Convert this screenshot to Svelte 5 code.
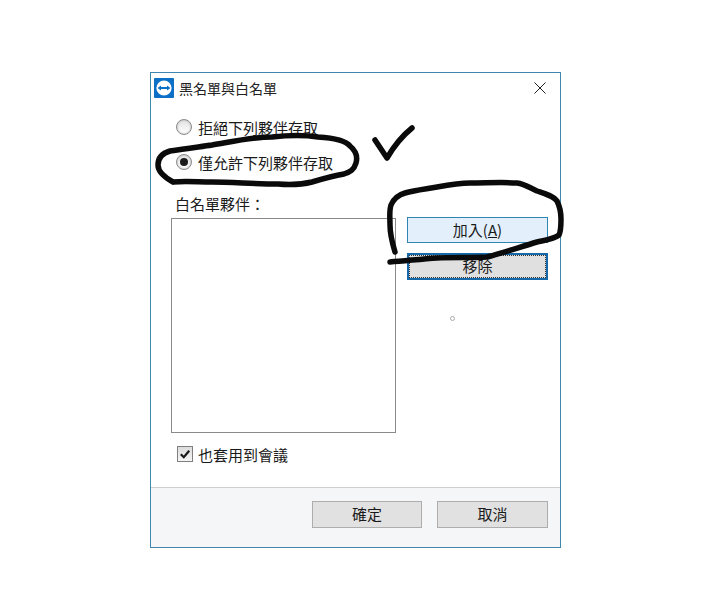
<script lang="ts">
  let mode = $state('allow');
  let alsoMeetings = $state(true);
  const partners: string[] = [];
</script>

<div class="page">
  <div class="dialog">
    <header class="titlebar">
      <svg class="app-icon" viewBox="0 0 20 20" width="20" height="20" aria-hidden="true">
        <rect width="20" height="20" rx="1" fill="#0e6fc6" />
        <circle cx="10" cy="10" r="7.6" fill="#fff" />
        <path d="M3.6 10 L7 7.6 V9 H13 V7.6 L16.4 10 L13 12.4 V11 H7 V12.4 Z" fill="#0e6fc6" />
      </svg>
      <span class="title">黑名單與白名單</span>
      <svg class="close" viewBox="0 0 12 12" width="12" height="12" aria-hidden="true">
        <path d="M0.5 0.5 L11.5 11.5 M11.5 0.5 L0.5 11.5" stroke="#222" stroke-width="1" fill="none" />
      </svg>
    </header>

    <div class="body">
      <label class="option">
        <input type="radio" bind:group={mode} value="deny" />
        <span class="radio"></span>
        拒絕下列夥伴存取
      </label>
      <label class="option">
        <input type="radio" bind:group={mode} value="allow" />
        <span class="radio"></span>
        僅允許下列夥伴存取
      </label>

      <div class="list-label">白名單夥伴：</div>
      <div class="list-row">
        <div class="listbox">
          {#each partners as p}
            <div>{p}</div>
          {/each}
        </div>
        <div class="side">
          <button class="btn add">加入(<u>A</u>)</button>
          <button class="btn remove"><span>移除</span></button>
          <span class="cursor"></span>
        </div>
      </div>

      <label class="check">
        <input type="checkbox" bind:checked={alsoMeetings} />
        <span class="box">
          {#if alsoMeetings}
            <svg viewBox="0 0 14 14" width="14" height="14" aria-hidden="true">
              <path d="M2.8 7.2 L5.8 10.2 L11.2 3.8" stroke="#1a1a1a" stroke-width="2.2" fill="none" />
            </svg>
          {/if}
        </span>
        也套用到會議
      </label>
    </div>

    <footer class="footer">
      <button class="btn plain">確定</button>
      <button class="btn plain">取消</button>
    </footer>
  </div>

  <!-- marker scribbles drawn on top of the screenshot -->
  <svg class="ink" viewBox="0 0 710 599" width="710" height="599" aria-hidden="true">
    <path d="M173 182 C164 177 158 172 158 165 C158 157 163 153 170 151 C185 149 198 147 212 145 C235 141 252 137 272 137 C290 135 305 135 318 137 C335 138 346 141 350 146 C356 151 358 156 356 163 C354 170 350 172 344 174 C332 176 322 179 312 182 C300 185 290 185 278 184 C255 184 232 182 212 182 C198 182 185 181 173 182" />
    <path d="M375 140 C379 146 383 152 387 158 C394 146 402 136 412 128" />
    <path d="M395 252 C392 242 390 234 390 225 C390 217 389 211 391 205 C394 198 398 195 405 193 C415 190 426 189 437 187 C448 185 459 183 470 183 C486 183 502 182 517 183 C525 184 530 188 537 191 C546 194 553 196 557 201 C560 207 561 212 561 219 C561 226 561 231 559 235 C554 239 546 240 537 242 C520 247 503 253 487 257 C470 258 453 257 437 258 C421 259 405 261 390 262" />
  </svg>
</div>

<style>
  :global(body) {
    margin: 0;
    background: #fff;
  }

  .page {
    position: relative;
    width: 710px;
    height: 599px;
    padding: 72px 0 0 150px;
    box-sizing: border-box;
    overflow: hidden;
    font-family: "Noto Sans CJK TC", "Liberation Sans", sans-serif;
    font-size: 15px;
    color: #1a1a1a;
  }

  .dialog {
    width: 411px;
    height: 476px;
    box-sizing: border-box;
    display: flex;
    flex-direction: column;
    background: #fff;
    border: 1px solid #3f87ae;
  }

  .titlebar {
    height: 29px;
    display: flex;
    align-items: center;
    padding: 0 14px 0 3px;
    flex: none;
  }

  .app-icon {
    margin-right: 5px;
  }

  .title {
    flex: 1;
    font-size: 14px;
    line-height: 20px;
    color: #222;
  }

  .body {
    flex: 1;
    padding: 14px 12px 0 20px;
  }

  .option {
    display: flex;
    align-items: center;
    height: 22px;
    margin: 0 0 13px 5px;
    gap: 6px;
  }

  .option input,
  .check input {
    position: absolute;
    opacity: 0;
    width: 0;
    height: 0;
  }

  .radio {
    width: 16px;
    height: 16px;
    box-sizing: border-box;
    border-radius: 50%;
    border: 1px solid #8a8a8a;
    background: linear-gradient(#e2e2e2, #fff);
    box-shadow: inset 0 0 2px #aaa;
    display: flex;
    align-items: center;
    justify-content: center;
  }

  .option input:checked + .radio::after {
    content: "";
    width: 8px;
    height: 8px;
    border-radius: 50%;
    background: #1c1c1c;
  }

  .list-label {
    margin-left: 4px;
    line-height: 22px;
    margin-top: 20px;
  }

  .list-row {
    display: flex;
    margin-top: 3px;
  }

  .listbox {
    width: 225px;
    height: 215px;
    box-sizing: border-box;
    border: 1px solid #8a8a8a;
    background: #fff;
    flex: none;
  }

  .side {
    margin-left: 11px;
    display: flex;
    flex-direction: column;
    align-items: center;
    width: 141px;
    margin-top: -1px;
  }

  .btn {
    font: inherit;
    color: #1a1a1a;
    padding: 0 0 2px;
    display: flex;
    align-items: center;
    justify-content: center;
    box-sizing: border-box;
    border-radius: 0;
  }

  .add {
    width: 141px;
    height: 26px;
    background: #e3f0fb;
    border: 1px solid #2f86b5;
  }

  .add u {
    text-underline-offset: 1px;
  }

  .remove {
    width: 141px;
    height: 27px;
    margin-top: 10px;
    background: #e0e0e0;
    border: 2px solid #1669a8;
    outline: 1px dotted #333;
    outline-offset: -3px;
  }

  .cursor {
    width: 5px;
    height: 5px;
    box-sizing: border-box;
    border: 1px solid #a9a9a9;
    border-radius: 50%;
    margin-top: 36px;
    margin-left: -51px;
  }

  .check {
    display: flex;
    align-items: center;
    height: 22px;
    margin: 10px 0 0 6px;
    gap: 5px;
  }

  .box {
    width: 16px;
    height: 16px;
    box-sizing: border-box;
    border: 1px solid #7f7f7f;
    background: linear-gradient(#dcdcdc, #f6f6f6);
    display: flex;
  }

  .footer {
    flex: none;
    height: 60px;
    box-sizing: border-box;
    display: flex;
    justify-content: flex-end;
    gap: 15px;
    padding: 13px 12px 0 0;
    background: #f4f6f8;
    border-top: 1px solid #cfcfcf;
  }

  .plain {
    width: 110px;
    height: 27px;
    background: #e1e1e1;
    border: 1px solid #adadad;
  }

  .footer .plain:last-child {
    width: 111px;
  }

  .ink {
    position: absolute;
    left: 0;
    top: 0;
    pointer-events: none;
  }

  .ink path {
    fill: none;
    stroke: #0a0a0a;
    stroke-width: 5.5;
    stroke-linecap: round;
    stroke-linejoin: round;
  }
</style>
